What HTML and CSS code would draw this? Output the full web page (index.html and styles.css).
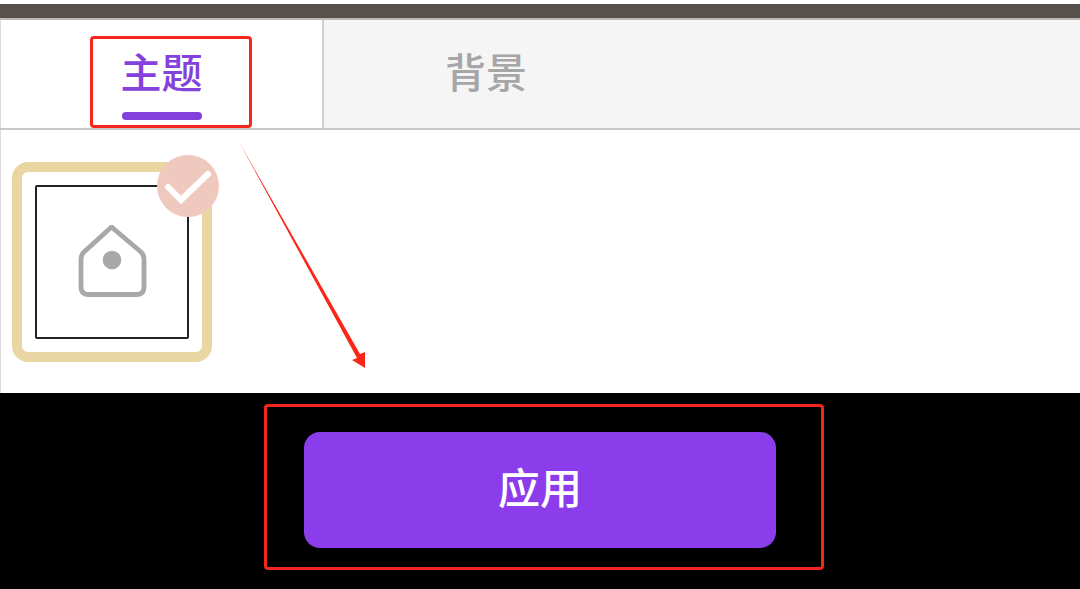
FILE: index.html
```html
<!DOCTYPE html>
<html lang="zh-CN">
<head>
<meta charset="utf-8">
<meta name="viewport" content="width=device-width, initial-scale=1">
<title>主题</title>
<link rel="stylesheet" href="styles.css">
</head>
<body>
<div class="screen">
  <header class="top-bar"></header>
  <nav class="tabs" role="tablist">
    <button class="tab tab-active" type="button" role="tab" aria-selected="true">
      <span class="tab-label">主题</span>
      <span class="mark mark-tab"></span>
    </button>
    <button class="tab" type="button" role="tab" aria-selected="false">
      <span class="tab-label">背景</span>
    </button>
  </nav>
  <main class="panel">
    <button class="theme" type="button" aria-label="默认主题" aria-pressed="true">
      <span class="theme-preview">
        <svg class="house" viewBox="0 0 70 74" aria-hidden="true">
          <path d="M34.500 2 L64 27 Q67 30 67 34 V62 Q67 69.500 60 69.500 H11 Q4 69.500 4 62 V34 Q4 30 7 27 Z" fill="none" stroke="#a8a8a8" stroke-width="4.800" stroke-linejoin="round"/>
          <circle cx="35" cy="35" r="9.300" fill="#a8a8a8"/>
        </svg>
      </span>
      <svg class="check" viewBox="0 0 62 62" aria-hidden="true">
        <circle cx="31" cy="31" r="31" fill="#f0c9be"/>
        <path d="M11 32 L24 45 L51 19" fill="none" stroke="#fff" stroke-width="6" stroke-linecap="round"/>
      </svg>
    </button>
    <svg class="arrow" viewBox="0 0 128 228" aria-hidden="true">
      <path d="M0 0 L121 212 L126 210 L126 226 L113 218 L118 216 Z" fill="#fb2618"/>
    </svg>
  </main>
  <footer class="footer">
    <div class="action">
      <button class="apply" type="button">应用</button>
      <span class="mark mark-action"></span>
    </div>
  </footer>
</div>
</body>
</html>
```

FILE: styles.css
```css
* {
  box-sizing: border-box;
}

body {
  margin: 0;
  background: #fff;
  font-family: "Noto Sans CJK SC", "Noto Sans", sans-serif;
}

button {
  margin: 0;
  padding: 0;
  border: 0;
  background: none;
  font-family: inherit;
  cursor: pointer;
}

.screen {
  display: flex;
  flex-direction: column;
  min-height: 100vh;
  padding-top: 4px;
}

.top-bar {
  height: 16px;
  background: #57504b;
  border-bottom: 2px solid #bdb6b1;
}

.tabs {
  display: flex;
  background: #f5f5f5;
  border-bottom: 2px solid #c8c8c8;
}

.tab {
  position: relative;
  display: flex;
  flex-direction: column;
  align-items: center;
  gap: 12px;
  width: 30%;
  padding: 20px 0 8px;
  color: #a6a6a6;
  font-size: 41px;
  font-weight: 500;
  line-height: 60px;
}

.tab-active {
  background: #fff;
  border-left: 1px solid #dcdcdc;
  border-right: 2px solid #d0d0d0;
  color: #8441dc;
}

.tab-active::after {
  content: "";
  width: 80px;
  height: 8px;
  border-radius: 4px;
  background: #8441dc;
}

.mark {
  position: absolute;
  border: 3px solid #f5261c;
  border-radius: 4px;
  pointer-events: none;
}

.mark-tab {
  inset: 16px 70px 0 89px;
}

.panel {
  position: relative;
  flex: 1;
  padding: 32px 11px 31px;
  border-left: 1px solid #dcdcdc;
}

.theme {
  position: relative;
  display: block;
  padding: 13px;
  border: 10px solid #ead6a2;
  border-radius: 16px;
}

.theme-preview {
  display: flex;
  align-items: center;
  justify-content: center;
  width: 154px;
  height: 154px;
  border: 2px solid #222;
  border-radius: 2px;
}

.house {
  width: 70px;
  height: 74px;
}

.check {
  position: absolute;
  top: -17px;
  right: -17px;
  width: 62px;
  height: 62px;
}

.arrow {
  position: absolute;
  top: 12px;
  left: 238px;
  width: 128px;
  height: 228px;
}

.footer {
  display: flex;
  justify-content: center;
  padding: 39px 0 41px;
  background: #000;
}

.action {
  position: relative;
  width: 472px;
  max-width: 100%;
}

.apply {
  display: block;
  width: 100%;
  padding: 24px 0 32px;
  border-radius: 16px;
  background: #8c3deb;
  color: #fff;
  font-size: 42px;
  font-weight: 500;
  line-height: 60px;
}

.mark-action {
  inset: -28px -48px -22px -40px;
}
```
